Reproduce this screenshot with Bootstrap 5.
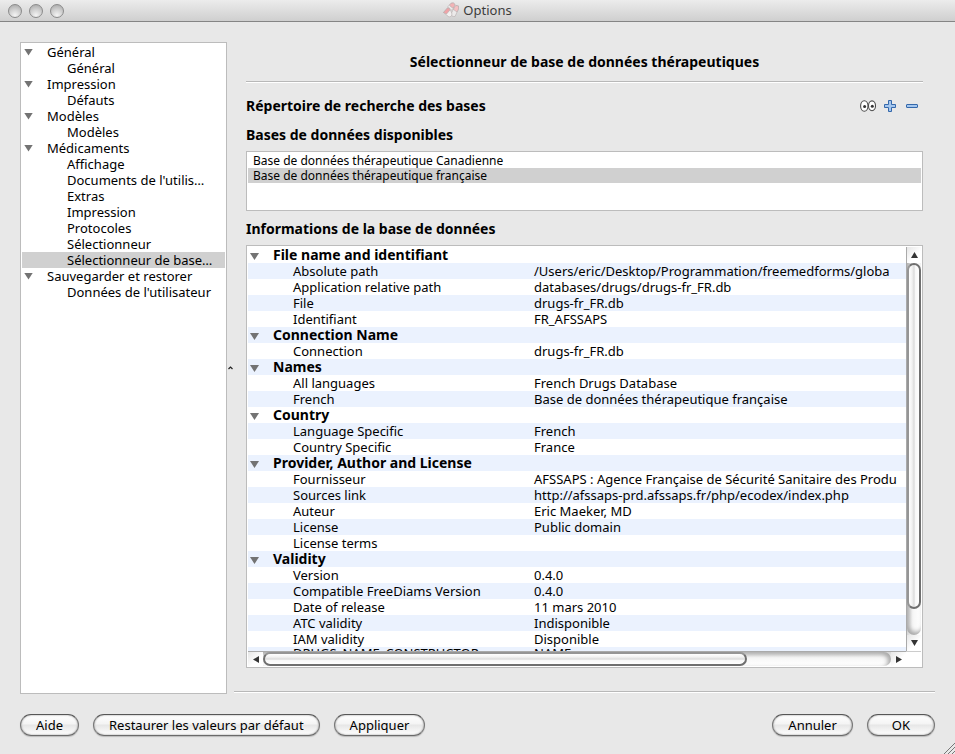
<!DOCTYPE html>
<html lang="fr">
<head>
<meta charset="utf-8">
<meta name="viewport" content="width=device-width, initial-scale=1">
<title>Options</title>
<link href="https://cdn.jsdelivr.net/npm/bootstrap@5.3.0/dist/css/bootstrap.min.css" rel="stylesheet">
<style>
  body { font-family: "Noto Sans", "Open Sans", sans-serif; font-size: 13px; line-height: 16px; color: #000; background: #e8e8e8; }
  h1, h2 { font-size: 14px; line-height: 16px; font-weight: 700; margin: 0; }
  button { color: inherit; font-size: inherit; line-height: inherit; }
  .title-bar { height: 22px; background: linear-gradient(#ececec, #cfcfcf); border-bottom: 1px solid #858585; color: #3c3c3c; line-height: 18px; padding-bottom: 2px; }
  .lights { left: 8px; top: 4px; gap: 7px; }
  .light { width: 14px; height: 14px; padding: 0; border: 1px solid #8b8b8b; border-radius: 50%; background: radial-gradient(circle at 50% 85%, #f4f4f4, #cfcfcf 50%, #a3a3a3); }
  .window-main { padding: 20px 20px 0; min-height: 0; }
  .pane-box { background: #fff; border: 1px solid #bcbcbc; padding: 1px; }
  .side-tree { width: 207px; }
  .side-tree button { display: flex; align-items: center; width: 100%; height: 16px; padding: 0; border: 0; background: none; white-space: nowrap; text-align: left; }
  .side-tree .leaf { padding-left: 45px; }
  .side-tree .chosen, .base-list .chosen { background: #d0d0d0; }
  .fold { width: 9px; height: 7px; margin-left: 2px; background: #737373; clip-path: polygon(0 0, 100% 0, 50% 100%); flex: none; }
  .side-tree .fold { margin-right: 14px; }
  .splitter { width: 7px; }
  .right-side { min-width: 0; }
  .content-pane { padding: 0 12px; min-height: 0; }
  .page-title { line-height: 40px; margin-bottom: -1px; }
  .rule { height: 2px; background: #fff; border-top: 1px solid #b8b8b8; flex: none; }
  .rule-end { margin-bottom: 1px; }
  .tool { width: 22px; height: 22px; padding: 0; border: 0; background: none; display: grid; place-items: center; }
  .tool-row { margin: 12px 0 10px; }
  .base-list { height: 60px; margin: 8px 0 10px; font-size: 12px; }
  .base-list button { display: block; width: 100%; height: 15px; line-height: 15px; padding: 0 5px; border: 0; background: none; text-align: left; }
  .info-box { margin: 8px 0 23px; min-height: 0; }
  .info-view { min-height: 0; min-width: 0; }
  .info-table { border-collapse: collapse; table-layout: fixed; width: 100%; white-space: nowrap; }
  .info-table .key-col { width: 286px; }
  .info-table th, .info-table td { height: 16px; padding: 0; font-weight: 400; }
  .info-table th { padding-left: 45px; }
  .info-table .group-head { padding-left: 0; font-weight: 700; font-size: 14px; }
  .info-table .fold { display: inline-block; margin-right: 14px; }
  .info-table tr:nth-child(even) { background: #ebf2fe; }
  .info-table tr:last-child { line-height: 12px; vertical-align: top; }
  .scroll-v { width: 15px; border-left: 1px solid #aaa; background: linear-gradient(90deg, #d4d4d4, #f6f6f6 40%, #fff); }
  .scroll-h { height: 15px; border-top: 1px solid #aaa; background: linear-gradient(#d4d4d4, #f6f6f6 40%, #fff); }
  .arrow { width: 15px; height: 14px; padding: 0; border: 0; display: grid; place-items: center; flex: none; background: linear-gradient(135deg, #e6e6e6, #fff 60%); }
  .arrow svg, .tool svg { display: block; }
  .track-v { border-radius: 0 0 8px 8px; box-shadow: inset 2px -3px 4px #aaa; }
  .track-h { border-radius: 0 8px 8px 0; box-shadow: inset -3px 2px 4px #aaa; }
  .scroll-v .arrow { width: 14px; height: 16px; }
  .thumb-v { height: 93%; border: 2px solid #6f6f6f; border-left-color: #959595; border-radius: 8px; background: linear-gradient(90deg, #fff, #f2f2f2 30%, #dcdcdc 50%, #f8f8f8 65%, #fff); }
  .thumb-h { width: 77%; height: 14px; border: 2px solid #6f6f6f; border-top-color: #959595; border-radius: 8px; background: linear-gradient(#fff, #f2f2f2 30%, #dcdcdc 50%, #f8f8f8 65%, #fff); }
  .corner { width: 15px; border-top: 1px solid #ccc; }
  .dialog-foot { padding: 20px 20px 18px; gap: 14px; }
  .pill { height: 22px; padding: 0 15px 1px; border: 1px solid #6a6a6a; border-color: #565656 #777 #6a6a6a; border-radius: 11px; background: linear-gradient(#fff, #f4f4f4 45%, #e6e6e6 50%, #fff); box-shadow: inset 0 0 2px #888, 0 1px 1px #bbb; line-height: 18px; }
  .grip { right: 0; bottom: 0; }
</style>
<script src="https://cdn.jsdelivr.net/npm/bootstrap@5.3.0/dist/js/bootstrap.bundle.min.js"></script>
</head>
<body class="d-flex flex-column vh-100 overflow-hidden position-relative">
<header class="title-bar d-flex justify-content-center align-items-center position-relative flex-shrink-0">
  <div class="lights d-flex position-absolute">
    <button class="light" aria-label="Fermer"></button><button class="light" aria-label="Réduire"></button><button class="light" aria-label="Agrandir"></button>
  </div>
  <svg width="16" height="17" viewBox="0 0 16 17" class="me-1" aria-hidden="true">
    <g stroke="#b5adad" stroke-width=".6">
      <path d="M5 5.500 8 2.300Q10.500 1 12 3.500T11 6.500L7.500 10Q4.500 9.500 5 5.500Z" fill="#eeecec"/>
      <path d="M6.500 4 8 2.300Q10.500 1 12 3.500L10.500 7Q7.500 6.500 6.500 4Z" fill="#f3b3b6"/>
      <path d="M15.500 5Q12.500 3.500 11.500 6L8 13Q9 16.500 12 15.500L15.500 8Z" fill="#eceaea"/>
      <path d="M15.500 5Q12.500 3.500 11.500 6L10.500 8.500 14 11 15.500 8Z" fill="#f5c0c2"/>
      <path d="M.5 11.500 4.500 7Q7.500 6.500 7.500 9L9 13Q9 16 6 16Z" fill="#f2f0f0"/>
      <path d="M.5 11.500 4.500 7Q7 6.500 7 9L3.500 13Z" fill="#f0a3a7"/>
    </g>
  </svg>
  <span>Options</span>
</header>

<main class="window-main d-flex flex-grow-1">
  <nav class="side-tree pane-box flex-shrink-0 overflow-hidden" aria-label="Pages">
    <button><span class="fold"></span>Général</button>
    <button class="leaf">Général</button>
    <button><span class="fold"></span>Impression</button>
    <button class="leaf">Défauts</button>
    <button><span class="fold"></span>Modèles</button>
    <button class="leaf">Modèles</button>
    <button><span class="fold"></span>Médicaments</button>
    <button class="leaf">Affichage</button>
    <button class="leaf">Documents de l'utilis…</button>
    <button class="leaf">Extras</button>
    <button class="leaf">Impression</button>
    <button class="leaf">Protocoles</button>
    <button class="leaf">Sélectionneur</button>
    <button class="leaf chosen">Sélectionneur de base…</button>
    <button><span class="fold"></span>Sauvegarder et restorer</button>
    <button class="leaf">Données de l'utilisateur</button>
  </nav>
  <div class="splitter d-flex align-items-center justify-content-center flex-shrink-0">
    <svg width="5" height="4" viewBox="0 0 5 4" aria-hidden="true"><path d="M.5 3 2.500 1 4.500 3" fill="none" stroke="#222" stroke-width="1.200"/></svg>
  </div>
  <div class="right-side d-flex flex-column flex-grow-1">
    <section class="content-pane d-flex flex-column flex-grow-1">
      <h1 class="page-title text-center">Sélectionneur de base de données thérapeutiques</h1>
      <div class="rule"></div>
      <div class="tool-row d-flex justify-content-between align-items-center">
        <h2>Répertoire de recherche des bases</h2>
        <div class="d-flex">
          <button class="tool" aria-label="Afficher"><svg width="16" height="12" viewBox="0 0 16 12"><g fill="#fff" stroke="#4c4c4c" stroke-width="1.100"><ellipse cx="4.300" cy="6" rx="3.700" ry="5.300"/><ellipse cx="12" cy="5.800" rx="3.500" ry="4.900"/></g><circle cx="4.600" cy="6.500" r="1.500" fill="#333"/><circle cx="12.300" cy="6.300" r="1.500" fill="#333"/></svg></button>
          <button class="tool" aria-label="Ajouter"><svg width="12" height="12" viewBox="0 0 12 12"><path d="M4.500.5h3v4h4v3h-4v4h-3v-4h-4v-3h4Z" fill="#a4c6ee" stroke="#3468ab"/></svg></button>
          <button class="tool" aria-label="Retirer"><svg width="12" height="4" viewBox="0 0 12 4"><rect x=".5" y=".5" width="11" height="3" rx=".5" fill="#a4c6ee" stroke="#3468ab"/></svg></button>
        </div>
      </div>
      <h2>Bases de données disponibles</h2>
      <div class="base-list pane-box flex-shrink-0">
        <button>Base de données thérapeutique Canadienne</button>
        <button class="chosen">Base de données thérapeutique française</button>
      </div>
      <h2>Informations de la base de données</h2>
      <div class="info-box pane-box d-flex flex-column flex-grow-1">
        <div class="info-view d-flex flex-grow-1">
          <div class="flex-grow-1 overflow-hidden info-view">
            <table class="info-table">
              <colgroup><col class="key-col"><col></colgroup>
              <tbody>
                <tr><th class="group-head" colspan="2"><span class="fold"></span>File name and identifiant</th></tr>
                <tr><th>Absolute path</th><td>/Users/eric/Desktop/Programmation/freemedforms/globa</td></tr>
                <tr><th>Application relative path</th><td>databases/drugs/drugs-fr_FR.db</td></tr>
                <tr><th>File</th><td>drugs-fr_FR.db</td></tr>
                <tr><th>Identifiant</th><td>FR_AFSSAPS</td></tr>
                <tr><th class="group-head" colspan="2"><span class="fold"></span>Connection Name</th></tr>
                <tr><th>Connection</th><td>drugs-fr_FR.db</td></tr>
                <tr><th class="group-head" colspan="2"><span class="fold"></span>Names</th></tr>
                <tr><th>All languages</th><td>French Drugs Database</td></tr>
                <tr><th>French</th><td>Base de données thérapeutique française</td></tr>
                <tr><th class="group-head" colspan="2"><span class="fold"></span>Country</th></tr>
                <tr><th>Language Specific</th><td>French</td></tr>
                <tr><th>Country Specific</th><td>France</td></tr>
                <tr><th class="group-head" colspan="2"><span class="fold"></span>Provider, Author and License</th></tr>
                <tr><th>Fournisseur</th><td>AFSSAPS : Agence Française de Sécurité Sanitaire des Produ</td></tr>
                <tr><th>Sources link</th><td>http://afssaps-prd.afssaps.fr/php/ecodex/index.php</td></tr>
                <tr><th>Auteur</th><td>Eric Maeker, MD</td></tr>
                <tr><th>License</th><td>Public domain</td></tr>
                <tr><th>License terms</th><td></td></tr>
                <tr><th class="group-head" colspan="2"><span class="fold"></span>Validity</th></tr>
                <tr><th>Version</th><td>0.4.0</td></tr>
                <tr><th>Compatible FreeDiams Version</th><td>0.4.0</td></tr>
                <tr><th>Date of release</th><td>11 mars 2010</td></tr>
                <tr><th>ATC validity</th><td>Indisponible</td></tr>
                <tr><th>IAM validity</th><td>Disponible</td></tr>
                <tr><th>DRUGS_NAME_CONSTRUCTOR</th><td>NAME</td></tr>
              </tbody>
            </table>
          </div>
          <div class="scroll-v d-flex flex-column flex-shrink-0">
            <button class="arrow" aria-label="Haut"><svg width="7" height="6"><path d="M0 6 3.500 0 7 6Z" fill="#333"/></svg></button>
            <div class="track-v flex-grow-1"><div class="thumb-v"></div></div>
            <button class="arrow" aria-label="Bas"><svg width="7" height="6"><path d="M0 0 3.500 6 7 0Z" fill="#333"/></svg></button>
          </div>
        </div>
        <div class="d-flex flex-shrink-0">
          <div class="scroll-h d-flex flex-grow-1">
            <button class="arrow" aria-label="Gauche"><svg width="6" height="7"><path d="M6 0 0 3.500 6 7Z" fill="#333"/></svg></button>
            <div class="track-h flex-grow-1"><div class="thumb-h"></div></div>
            <button class="arrow" aria-label="Droite"><svg width="6" height="7"><path d="M0 0 6 3.500 0 7Z" fill="#333"/></svg></button>
          </div>
          <div class="corner"></div>
        </div>
      </div>
    </section>
    <div class="rule rule-end"></div>
  </div>
</main>

<footer class="dialog-foot d-flex flex-shrink-0">
  <button class="pill">Aide</button>
  <button class="pill">Restaurer les valeurs par défaut</button>
  <button class="pill">Appliquer</button>
  <button class="pill ms-auto">Annuler</button>
  <button class="pill px-4">OK</button>
</footer>
<svg class="grip position-absolute" width="12" height="12" viewBox="0 0 12 12" aria-hidden="true"><path d="M1 12 12 1M5 12 12 5M9 12 12 9" stroke="#777" fill="none"/></svg>
</body>
</html>
